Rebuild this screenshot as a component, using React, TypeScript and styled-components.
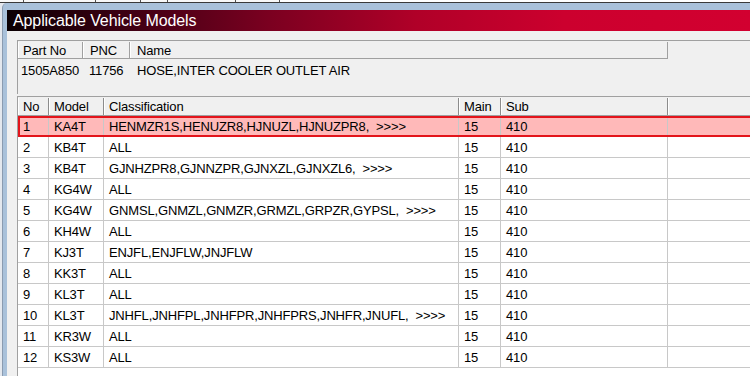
import React from "react";
import styled, { createGlobalStyle } from "styled-components";

const Global = createGlobalStyle`
  html, body { margin: 0; padding: 0; }
  body { width: 750px; height: 376px; overflow: hidden; background: #e4e8ee; font-family: "Liberation Sans", Arial, sans-serif; }
`;

const Screen = styled.div`
  width: 750px;
  height: 376px;
  display: flex;
  flex-direction: column;
  overflow: hidden;
  background: #e4e8ee;
`;

const TopStrip = styled.div`
  height: 2px;
  display: flex;
  border-bottom: 1px solid #3a3a3a;
  background: #ffffff;
  flex: none;
`;

const StripCell = styled.div<{ $w: number }>`
  width: ${(p) => p.$w}px;
  border-right: 1px solid #505050;
  background: #f8f8f8;
  flex: none;
`;

const Window = styled.div`
  flex: 1;
  margin-left: 2px;
  padding: 7px 0 0 4px;
  background: #a9c1da;
  border-top-left-radius: 5px;
  border-left: 1px solid #8a9bb0;
  display: flex;
  flex-direction: column;
  min-height: 0;
`;

const TitleBar = styled.div`
  height: 21px;
  flex: none;
  display: flex;
  align-items: center;
  padding-left: 6px;
  background: linear-gradient(90deg, #0a0003 0%, #3a0012 15%, #7a0020 35%, #b00028 55%, #cc002e 75%, #d20030 100%);
  color: #ffffff;
  font-size: 16px;
  letter-spacing: -0.1px;
`;

const Content = styled.div`
  flex: 1;
  background: #f0f0f0;
  padding: 9px 0 0 10px;
  display: flex;
  flex-direction: column;
  gap: 2px;
  min-height: 0;
`;

const InfoBox = styled.div`
  height: 53px;
  flex: none;
  border-top: 1px solid #a0a0a0;
  border-left: 1px solid #a0a0a0;
  display: flex;
  flex-direction: column;
`;

const infoCols = "65px 47px 538px";

const InfoHeader = styled.div`
  display: grid;
  grid-template-columns: ${infoCols};
  height: 18px;
  width: 650px;
  border-bottom: 1px solid #a0a0a0;
  padding-top: 1px;
  box-sizing: border-box;
`;

const InfoHeadCell = styled.div<{ $pad: number }>`
  display: flex;
  align-items: center;
  padding-left: ${(p) => p.$pad}px;
  font-size: 13px;
  letter-spacing: -0.15px;
  color: #000;
  border-right: 1px solid #a0a0a0;
  box-shadow: inset 1px 0 0 #ffffff;
  white-space: nowrap;
`;

const InfoData = styled.div`
  display: grid;
  grid-template-columns: ${infoCols};
  height: 23px;
`;

const InfoDataCell = styled.div<{ $pad: number }>`
  display: flex;
  align-items: center;
  padding-left: ${(p) => p.$pad}px;
  font-size: 13px;
  letter-spacing: -0.15px;
  color: #000;
  white-space: nowrap;
`;

const Table = styled.div`
  flex: 1;
  display: flex;
  flex-direction: column;
  background: #ffffff;
  border-top: 1px solid #a0a0a0;
  border-left: 1px solid #a0a0a0;
  min-height: 0;
  overflow: hidden;
`;

const cols = "31px 55px 355px 42px 167px 1fr";

const HeadRow = styled.div`
  display: grid;
  grid-template-columns: ${cols};
  height: 19px;
  background: #f0f0f0;
  border-bottom: 1px solid #a0a0a0;
  flex: none;
  padding-top: 1px;
  box-sizing: border-box;
`;

const HeadCell = styled.div<{ $last?: boolean }>`
  display: flex;
  align-items: center;
  padding-left: 5px;
  font-size: 13px;
  letter-spacing: -0.15px;
  color: #000;
  border-right: ${(p) => (p.$last ? "none" : "1px solid #8c8c8c")};
  box-shadow: inset 1px 0 0 #ffffff;
  white-space: nowrap;
`;

const Row = styled.div<{ $sel?: boolean }>`
  display: grid;
  grid-template-columns: ${cols};
  height: 21px;
  flex: none;
  position: relative;
  background: ${(p) => (p.$sel ? "#ffb9b9" : "#ffffff")};
  &::after {
    content: "";
    position: absolute;
    top: 0;
    bottom: 0;
    left: 0;
    right: -4px;
    pointer-events: none;
    box-shadow: ${(p) => (p.$sel ? "inset 0 0 0 2px #e3141b" : "none")};
  }
`;

const Cell = styled.div<{ $last?: boolean }>`
  display: flex;
  align-items: center;
  padding-left: 5px;
  font-size: 13px;
  letter-spacing: -0.15px;
  color: #000;
  border-right: ${(p) => (p.$last ? "none" : "1px solid #c8c8c8")};
  border-bottom: 1px solid #c8c8c8;
  white-space: pre;
  overflow: hidden;
`;

const rows = [
  ["1", "KA4T", "HENMZR1S,HENUZR8,HJNUZL,HJNUZPR8,  >>>>"],
  ["2", "KB4T", "ALL"],
  ["3", "KB4T", "GJNHZPR8,GJNNZPR,GJNXZL,GJNXZL6,  >>>>"],
  ["4", "KG4W", "ALL"],
  ["5", "KG4W", "GNMSL,GNMZL,GNMZR,GRMZL,GRPZR,GYPSL,  >>>>"],
  ["6", "KH4W", "ALL"],
  ["7", "KJ3T", "ENJFL,ENJFLW,JNJFLW"],
  ["8", "KK3T", "ALL"],
  ["9", "KL3T", "ALL"],
  ["10", "KL3T", "JNHFL,JNHFPL,JNHFPR,JNHFPRS,JNHFR,JNUFL,  >>>>"],
  ["11", "KR3W", "ALL"],
  ["12", "KS3W", "ALL"],
];

export default function App() {
  return (
    <Screen>
      <Global />
      <TopStrip>
        {[23, 71, 44, 26, 67, 43].map((w, i) => (
          <StripCell key={i} $w={w} />
        ))}
      </TopStrip>
      <Window>
        <TitleBar>Applicable Vehicle Models</TitleBar>
        <Content>
          <InfoBox>
            <InfoHeader>
              <InfoHeadCell $pad={5}>Part No</InfoHeadCell>
              <InfoHeadCell $pad={7}>PNC</InfoHeadCell>
              <InfoHeadCell $pad={7}>Name</InfoHeadCell>
            </InfoHeader>
            <InfoData>
              <InfoDataCell $pad={3}>1505A850</InfoDataCell>
              <InfoDataCell $pad={6}>11756</InfoDataCell>
              <InfoDataCell $pad={7}>HOSE,INTER COOLER OUTLET AIR</InfoDataCell>
            </InfoData>
          </InfoBox>
          <Table>
            <HeadRow>
              <HeadCell>No</HeadCell>
              <HeadCell>Model</HeadCell>
              <HeadCell>Classification</HeadCell>
              <HeadCell>Main</HeadCell>
              <HeadCell>Sub</HeadCell>
              <HeadCell $last />
            </HeadRow>
            {rows.map((r, i) => (
              <Row key={i} $sel={i === 0}>
                <Cell>{r[0]}</Cell>
                <Cell>{r[1]}</Cell>
                <Cell>{r[2]}</Cell>
                <Cell>15</Cell>
                <Cell>410</Cell>
                <Cell $last />
              </Row>
            ))}
          </Table>
        </Content>
      </Window>
    </Screen>
  );
}
